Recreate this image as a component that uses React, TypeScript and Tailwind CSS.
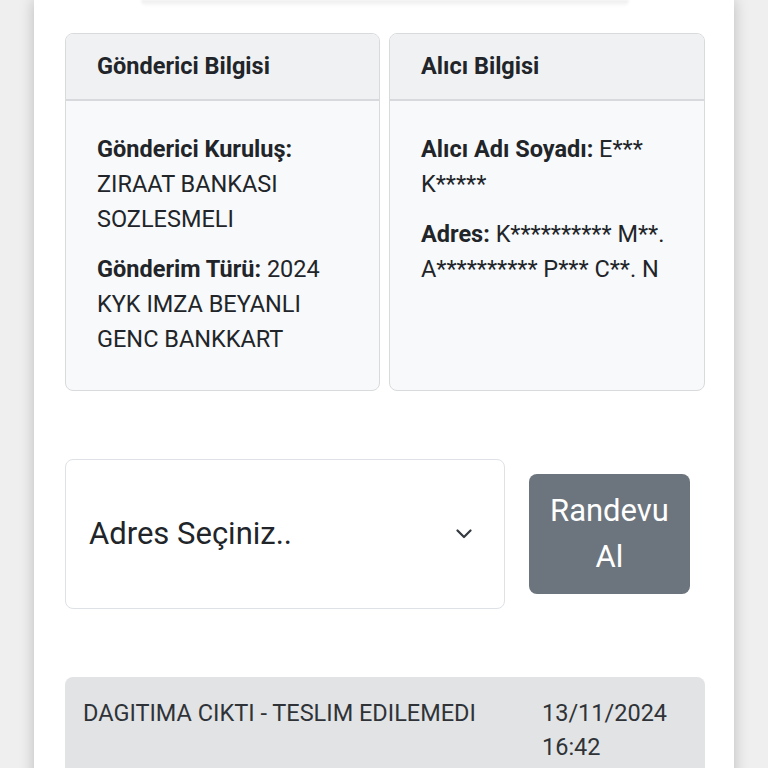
export default function App() {
  return (
    <div
      className="min-h-screen w-full bg-[#efefef] flex justify-center overflow-hidden"
      style={{ fontFamily: "Roboto, 'Noto Sans', sans-serif" }}
    >
      <div className="w-[700px] min-h-screen bg-white shadow-[0_0_14px_rgba(0,0,0,0.22)] pl-[31px] pr-[29px] text-[#212529]">
        {/* gölge: üstteki kartın alt kenarı */}
        <div className="h-[7px] mx-[76px] bg-gradient-to-b from-[#ececec] to-white rounded-b-2xl blur-[1px]" />

        <div className="mt-[26px] grid grid-cols-[315px_316px] gap-[9px]">
          <div className="rounded-[8px] border border-[#d9dadc] bg-[#f8f9fa] overflow-hidden flex flex-col">
            <div className="h-[67px] bg-[#f0f1f3] border-b-2 border-[#d7d9dc] pl-[31px] flex items-center text-[23.5px] font-bold">
              Gönderici Bilgisi
            </div>
            <div className="pt-[31px] pb-[18px] pl-[31px] pr-[22px] text-[23.5px] leading-[35px]">
              <p className="mb-[15px]">
                <span className="font-bold">Gönderici Kuruluş:</span> ZIRAAT BANKASI SOZLESMELI
              </p>
              <p className="mb-[15px]">
                <span className="font-bold">Gönderim Türü:</span> 2024 KYK IMZA BEYANLI GENC BANKKART
              </p>
            </div>
          </div>

          <div className="rounded-[8px] border border-[#d9dadc] bg-[#f8f9fa] overflow-hidden flex flex-col">
            <div className="h-[67px] bg-[#f0f1f3] border-b-2 border-[#d7d9dc] pl-[31px] flex items-center text-[23.5px] font-bold">
              Alıcı Bilgisi
            </div>
            <div className="pt-[31px] pb-[18px] pl-[31px] pr-[28px] text-[23.5px] leading-[35px]">
              <p className="mb-[15px]">
                <span className="font-bold">Alıcı Adı Soyadı:</span> E*** K*****
              </p>
              <p className="mb-[15px]">
                <span className="font-bold">Adres:</span> K********** M**. A********** P*** C**. N
              </p>
            </div>
          </div>
        </div>

        <div className="mt-[68px] flex items-center">
          <div className="w-[440px] h-[150px] rounded-[8px] border border-[#dee2e6] bg-white flex items-center justify-between pl-[23px] pr-[32px]">
            <span className="text-[31px]">Adres Seçiniz..</span>
            <svg width="16" height="10" viewBox="0 0 16 10" fill="none" className="text-[#343a40]">
              <path d="M1.5 1.5 L8 8 L14.5 1.5" stroke="currentColor" strokeWidth="2.2" strokeLinecap="round" strokeLinejoin="round" />
            </svg>
          </div>
          <button className="ml-[24px] w-[161px] h-[120px] rounded-[8px] bg-[#6c757d] text-white text-[31px] leading-[46px] px-[16px]">
            Randevu Al
          </button>
        </div>

        <div className="mt-[68px] rounded-t-[8px] bg-[#e2e3e5] pt-[19px] pb-[40px] pl-[18px] grid grid-cols-[459px_1fr] text-[23.5px] leading-[34px] text-[#2f3337]">
          <span>DAGITIMA CIKTI - TESLIM EDILEMEDI</span>
          <span className="pr-[30px]">13/11/2024 16:42</span>
        </div>
      </div>
    </div>
  );
}
